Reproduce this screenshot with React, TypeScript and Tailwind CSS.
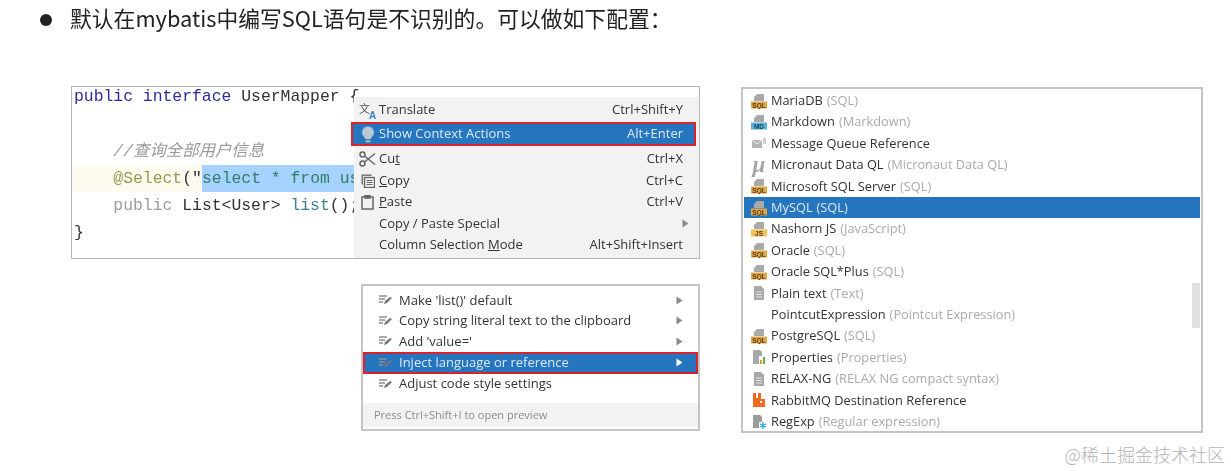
const uiFont = "font-['Open_Sans','Noto_Sans_CJK_SC',sans-serif]";

function Arrow({ light }: { light?: boolean }) {
  return (
    <svg width="7" height="9" viewBox="0 0 7 9" className="shrink-0">
      <path d="M0.5 0.5 L6.5 4.5 L0.5 8.5 Z" fill={light ? "#ffffff" : "#8a8a8a"} />
    </svg>
  );
}

function TranslateIcon() {
  return (
    <svg width="20" height="19" viewBox="0 0 20 19" className="shrink-0">
      <text x="1" y="12" fontSize="11" fill="#555" fontFamily="Noto Sans CJK SC">文</text>
      <text x="11" y="18" fontSize="10" fontWeight="700" fill="#2f7fc8" fontFamily="Liberation Sans">A</text>
    </svg>
  );
}

function BulbIcon() {
  return (
    <svg width="14" height="17" viewBox="0 0 14 17" className="shrink-0">
      <path d="M7 0.5a6 6 0 0 1 3.2 11v1.5H3.8v-1.500A6 6 0 0 1 7 0.5z" fill="#b9c7d3" />
      <path d="M4.5 14h5v1.200l-1 1.300h-3l-1-1.300z" fill="#a3b3c0" />
    </svg>
  );
}

function ScissorsIcon() {
  return (
    <svg width="17" height="16" viewBox="0 0 17 16" className="shrink-0" fill="none" stroke="#666" strokeWidth="1.5">
      <circle cx="3.500" cy="3.500" r="2.500" />
      <circle cx="3.500" cy="12.500" r="2.500" />
      <path d="M5.500 5 L16 13.500 M5.500 11 L16 2.500" />
    </svg>
  );
}

function CopyIcon() {
  return (
    <svg width="14" height="14" viewBox="0 0 14 14" className="shrink-0">
      <path d="M0.500 0.500h10v1.500h-8.500v8.500h-1.500z" fill="#777" />
      <rect x="3.500" y="3.500" width="10" height="10" fill="none" stroke="#666" strokeWidth="1.400" />
      <path d="M5.500 6.500h6M5.500 8.500h6M5.500 10.500h6" stroke="#666" />
    </svg>
  );
}

function PasteIcon() {
  return (
    <svg width="13" height="15" viewBox="0 0 13 15" className="shrink-0" fill="none" stroke="#666" strokeWidth="1.500">
      <rect x="1" y="2" width="11" height="12" />
      <rect x="4" y="0.500" width="5" height="2.500" fill="#666" />
    </svg>
  );
}

function IntentionIcon() {
  return (
    <svg width="14" height="12" viewBox="0 0 14 12" className="shrink-0">
      <path d="M0 2h8M0 5h6M0 8h4" stroke="#8e8e8e" strokeWidth="1.300" />
      <path d="M5 10l1-3 5-4 2 1-5 5z" fill="#777" />
    </svg>
  );
}

function ContextMenu() {
  const rows = [
    { label: "Cut", underline: 2, shortcut: "Ctrl+X", icon: <ScissorsIcon />, h: "h-[23px]" },
    { label: "Copy", underline: 0, shortcut: "Ctrl+C", icon: <CopyIcon />, h: "h-[21px]" },
    { label: "Paste", underline: 0, shortcut: "Ctrl+V", icon: <PasteIcon />, h: "h-[22px]" },
    { label: "Copy / Paste Special", arrow: true, h: "h-[21px]" },
    { label: "Column Selection Mode", underline: 17, shortcut: "Alt+Shift+Insert", h: "h-[21px]" },
  ];

  return (
    <div className={`absolute right-0 top-[10px] bottom-0 w-[345px] bg-[#f2f2f2] pt-[1px] text-[13px] text-[#333] ${uiFont}`}>
      <div className="flex h-[24px] items-center pl-[2px] pr-[16px]">
        <span className="flex w-[23px] justify-center"><TranslateIcon /></span>
        <span>Translate</span>
        <span className="ml-auto">Ctrl+Shift+Y</span>
      </div>
      <div className="-ml-[3px] mb-[1px] mr-[3px] flex h-[24px] items-center border-2 border-[#d8222c] bg-[#2675bf] pl-[3px] pr-[11px] text-[#dbe9f6]">
        <span className="flex w-[23px] justify-center"><BulbIcon /></span>
        <span>Show Context Actions</span>
        <span className="ml-auto">Alt+Enter</span>
      </div>
      {rows.map((row) => (
        <div key={row.label} className={`flex items-center pl-[2px] pr-[16px] ${row.h}`}>
          <span className="flex w-[23px] justify-center">{row.icon}</span>
          <span>
            {row.underline === undefined ? (
              row.label
            ) : (
              <>
                {row.label.slice(0, row.underline)}
                <span className="underline">{row.label[row.underline]}</span>
                {row.label.slice(row.underline + 1)}
              </>
            )}
          </span>
          <span className="ml-auto">{row.arrow ? <span className="-mr-[6px] block"><Arrow /></span> : row.shortcut}</span>
        </div>
      ))}
    </div>
  );
}

function CodeWindow() {
  return (
    <div className="relative h-[173px] overflow-hidden border border-[#b5b5b5] bg-white font-['Liberation_Mono',monospace] text-[16.4px] leading-[27.3px] text-[#333] whitespace-pre">
      <div className="pl-[2px] -mt-[4px]">
        <div><span className="text-[#2b2b9a]">public interface</span> UserMapper {"{"}</div>
        <div>&nbsp;</div>
        <div className="italic text-[#9a9a9a] font-['Liberation_Mono','Noto_Sans_CJK_SC',monospace]">{"    //查询全部用户信息"}</div>
        <div className="-ml-[2px] flex h-[27.3px]">
          <span className="w-[130px] bg-[#fdfbf0] pl-[2px] text-[#9a9a50]">{"    @Select"}<span className="text-[#333]">(&quot;</span></span>
          <span className="w-[152px] bg-[#a6d2ff] text-[#2f7f6a]">select * from user</span>
        </div>
        <div>
          <span className="text-[#9c9c9c]">{"    public"}</span> List&lt;User&gt; <span className="text-[#3f7f8a]">list</span>();
        </div>
        <div>{"}"}</div>
      </div>
      <ContextMenu />
    </div>
  );
}

function IntentionMenu() {
  const rows = [
    { label: "Make 'list()' default", arrow: true },
    { label: "Copy string literal text to the clipboard", arrow: true },
    { label: "Add 'value='", arrow: true },
    { label: "Inject language or reference", arrow: true, active: true },
    { label: "Adjust code style settings" },
  ];

  return (
    <div className={`ml-[290px] mt-[25px] flex h-[147px] w-[339px] flex-col border-2 border-[#c4c4c4] bg-white pb-[2px] text-[13px] text-[#333] ${uiFont}`}>
      <div className="flex-1 pt-[4px]">
        {rows.map((row) => (
          <div
            key={row.label}
            className={
              row.active
                ? "flex h-[22px] items-center border-2 border-[#d8222c] bg-[#2675bf] pl-[14px] pr-[13px] text-[#dbe9f6]"
                : "flex h-[20.5px] items-center pl-[16px] pr-[15px]"
            }
          >
            <span className="w-[20px]"><IntentionIcon /></span>
            <span>{row.label}</span>
            <span className="ml-auto">{row.arrow ? <Arrow light={row.active} /> : null}</span>
          </div>
        ))}
      </div>
      <div className="flex h-[24px] items-center bg-[#f2f2f2] pl-[11px] text-[11px] text-[#8c8c8c]">
        Press Ctrl+Shift+I to open preview
      </div>
    </div>
  );
}

function DbIcon({ tag, color, text = "#fff" }: { tag: string; color: string; text?: string }) {
  return (
    <svg width="16" height="16" viewBox="0 0 16 16" className="shrink-0">
      <path d="M6 1h7v7H3V4z" fill="#a9a9a9" />
      <rect x="0" y="8.500" width="16" height="7" fill={color} />
      <text x="8" y="14.500" textAnchor="middle" fontSize="6.500" fontWeight="700" fill={text} fontFamily="Liberation Sans">{tag}</text>
    </svg>
  );
}

function FileIcon() {
  return (
    <svg width="16" height="16" viewBox="0 0 16 16" className="shrink-0">
      <path d="M3 1h7l3 3v11H3z" fill="#a8a8a8" />
      <path d="M5 7h6M5 9.500h6M5 12h6" stroke="#e4e4e4" strokeWidth="1" />
    </svg>
  );
}

const sql = <DbIcon tag="SQL" color="#e3a64a" text="#5a3b10" />;

const languages = [
  { name: "MariaDB", hint: "(SQL)", icon: sql },
  { name: "Markdown", hint: "(Markdown)", icon: <DbIcon tag="MD" color="#5eb1d3" text="#134a63" /> },
  {
    name: "Message Queue Reference",
    icon: (
      <svg width="16" height="16" viewBox="0 0 16 16" className="shrink-0">
        <path d="M1 5h10v8H1z" fill="#b5b5b5" />
        <path d="M1 5l5 4 5-4" stroke="#eee" fill="none" />
        <path d="M12 3h3v6h-3z" fill="#cfcfcf" />
      </svg>
    ),
  },
  {
    name: "Micronaut Data QL",
    hint: "(Micronaut Data QL)",
    icon: <span className="w-[16px] text-center font-['Liberation_Serif',serif] text-[23px] font-bold italic leading-[16px] text-[#a5a5a5]">μ</span>,
  },
  { name: "Microsoft SQL Server", hint: "(SQL)", icon: sql },
  { name: "MySQL", hint: "(SQL)", icon: sql, active: true },
  { name: "Nashorn JS", hint: "(JavaScript)", icon: <DbIcon tag="JS" color="#efc25c" text="#5a3b10" /> },
  { name: "Oracle", hint: "(SQL)", icon: sql },
  { name: "Oracle SQL*Plus", hint: "(SQL)", icon: sql },
  { name: "Plain text", hint: "(Text)", icon: <FileIcon /> },
  { name: "PointcutExpression", hint: "(Pointcut Expression)", icon: <span className="w-[16px]" /> },
  { name: "PostgreSQL", hint: "(SQL)", icon: sql },
  {
    name: "Properties",
    hint: "(Properties)",
    icon: (
      <svg width="16" height="16" viewBox="0 0 16 16" className="shrink-0">
        <path d="M2 1h7l2 2v4H8v8H2z" fill="#a8a8a8" />
        <rect x="9" y="11" width="2" height="4" fill="#e0a030" />
        <rect x="12" y="8" width="2" height="7" fill="#6aa84f" />
      </svg>
    ),
  },
  { name: "RELAX-NG", hint: "(RELAX NG compact syntax)", icon: <FileIcon /> },
  {
    name: "RabbitMQ Destination Reference",
    icon: (
      <svg width="16" height="16" viewBox="0 0 16 16" className="shrink-0">
        <path d="M2 1h3v5h2V1h3v6h4v8H2z" fill="#f26a1b" />
        <rect x="9" y="9" width="2" height="2" fill="#fff" />
      </svg>
    ),
  },
  {
    name: "RegExp",
    hint: "(Regular expression)",
    icon: (
      <svg width="16" height="16" viewBox="0 0 16 16" className="shrink-0">
        <path d="M2 1h7l2 2v5H8v6H2z" fill="#9a9a9a" />
        <path d="M12 8v7M9 10l6 3M15 10l-6 3" stroke="#2aa6e0" strokeWidth="1.300" />
      </svg>
    ),
  },
];

function LanguageList() {
  return (
    <div className={`relative mt-px h-[346px] w-[462px] overflow-hidden border-2 border-[#c4c4c4] bg-white pl-px pt-[1px] text-[12.8px] text-[#333] ${uiFont}`}>
      {languages.map((lang) => (
        <div
          key={lang.name}
          className={`flex h-[21.4px] items-center pl-[7px] ${lang.active ? "mr-[1px] bg-[#2675bf] text-[#dbe9f6]" : ""}`}
        >
          <span className="flex w-[20px] justify-start">{lang.icon}</span>
          <span className="whitespace-pre">{lang.name}</span>
          {lang.hint ? <span className={`ml-[4px] ${lang.active ? "" : "text-[#aaaaaa]"}`}>{lang.hint}</span> : null}
        </div>
      ))}
      {/* scrollbar thumb */}
      <div className="absolute right-[1px] top-[194px] h-[45px] w-[8px] bg-[#e0e0e0]" />
    </div>
  );
}

export default function App() {
  return (
    <div className="relative h-[471px] w-[1231px] overflow-hidden bg-white">
      <div className="flex h-[40px] items-center pl-[40px] blur-[0.3px]">
        <span className="h-[12px] w-[12px] rounded-full bg-[#222]" />
        <span className="-mt-[4px] ml-[18px] font-['Noto_Sans_CJK_SC',sans-serif] text-[21.8px] leading-none text-[#222]">
          默认在mybatis中编写SQL语句是不识别的。可以做如下配置：
        </span>
      </div>
      <div className="mt-[46px] flex gap-[41px] pl-[71px] blur-[0.35px]">
        <div className="w-[629px]">
          <CodeWindow />
          <IntentionMenu />
        </div>
        <LanguageList />
      </div>
      <span className="absolute bottom-[3px] right-[6px] font-['Noto_Sans_CJK_SC',sans-serif] text-[18px] font-light text-[#b4b4b4]">
        @稀土掘金技术社区
      </span>
    </div>
  );
}
